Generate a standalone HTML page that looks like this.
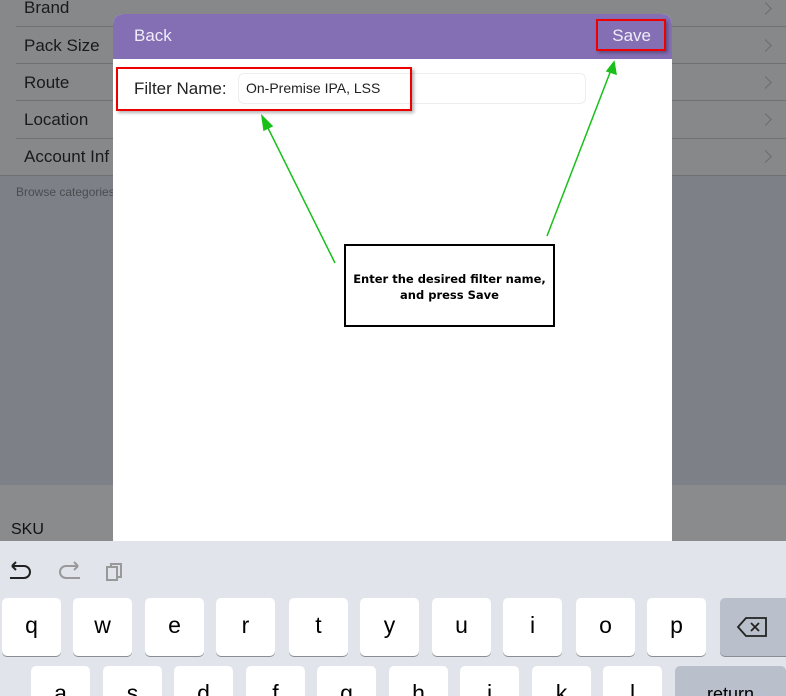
<!DOCTYPE html><html style="height:696px;overflow:hidden"><head><style>
body{margin:0;width:786px;height:696px;overflow:hidden;position:relative;font-family:"Liberation Sans",sans-serif;background:#86888a}
.abs{position:absolute}
.row{position:absolute;left:24px;font-size:17px;color:#1a1a1a}
.sep{position:absolute;left:16px;right:0;height:1px;background:#6f7173}
.chev{position:absolute;right:16px;width:8px;height:8px;border-right:1.5px solid #6a6c6e;border-top:1.5px solid #6a6c6e;transform:rotate(45deg)}
.key{position:absolute;width:59px;height:58px;background:#fff;border-radius:5px;box-shadow:0 1px 0 #8a8d92;font-size:23px;text-align:center;line-height:54px;color:#000}
</style></head><body>
<div class="abs" style="left:0;top:175px;width:786px;height:366px;background:#7d8086"></div>
<div class="abs" style="left:0;top:485px;width:786px;height:56px;background:#8a8b8d"></div>
<div class="row" style="top:-2px">Brand</div>
<div class="row" style="top:36px">Pack Size</div>
<div class="row" style="top:73px">Route</div>
<div class="row" style="top:110px">Location</div>
<div class="row" style="top:147px">Account Inf</div>
<div class="sep" style="top:26px"></div><div class="sep" style="top:63px"></div><div class="sep" style="top:100px"></div><div class="sep" style="top:138px"></div><div class="sep" style="top:175px;left:0"></div>
<div class="chev" style="top:4px"></div><div class="chev" style="top:41px"></div><div class="chev" style="top:78px"></div><div class="chev" style="top:115px"></div><div class="chev" style="top:152px"></div>
<div class="abs" style="left:16px;top:185px;font-size:12px;color:#4a4c50">Browse categories</div>
<div class="abs" style="left:11px;top:521px;font-size:16px;color:#111">SKU</div>
<div class="abs" style="left:113px;top:14px;width:559px;height:527px;background:#fff;border-radius:10px 10px 0 0;overflow:hidden">
<div style="height:45px;background:#846fb5;position:relative">
<span class="abs" style="left:21px;top:12px;font-size:17px;color:#f0ecf8">Back</span>
<span class="abs" style="right:21px;top:12px;font-size:17px;color:#f0ecf8">Save</span>
</div>
<div class="abs" style="left:125px;top:59px;width:346px;height:29px;border:1px solid #eee;border-radius:6px"></div>
<div class="abs" style="left:21px;top:65px;font-size:17px;color:#222">Filter Name:</div>
<div class="abs" style="left:133px;top:66px;font-size:14px;color:#222">On-Premise IPA, LSS</div>
</div>
<div class="abs" style="left:116px;top:67px;width:292px;height:40px;border:2px solid #e00;box-shadow:2px 2px 3px rgba(0,0,0,.3)"></div>
<div class="abs" style="left:596px;top:19px;width:66px;height:28px;border:2px solid #e00;box-shadow:2px 2px 3px rgba(0,0,0,.3)"></div>
<svg class="abs" style="left:0;top:0" width="786" height="540">
<g stroke="#19c019" stroke-width="1.5" fill="#19c019">
<line x1="335" y1="263" x2="266" y2="124"/><polygon points="262,116 272,126 264,130"/>
<line x1="547" y1="236" x2="611" y2="70"/><polygon points="614,62 616,74 607,71"/>
</g></svg>
<div class="abs" style="left:344px;top:244px;width:211px;height:83px;border:2px solid #000;background:#fff;font-family:'DejaVu Sans',sans-serif;font-weight:bold;font-size:11.5px;text-align:center;line-height:16px;padding-top:25px;box-sizing:border-box">Enter the desired filter name,<br>and press Save</div>
<div class="abs" style="left:0;top:541px;width:786px;height:155px;background:#e1e5eb;overflow:hidden">
<svg class="abs" style="left:8px;top:19px" width="130" height="26" fill="none" stroke-width="2">
<path d="M4 6 h12 a6 6 0 0 1 0 12 h-14 M4 6 l4-4 M4 6 l4 4" stroke="#222"/>
<path d="M70 6 h-12 a6 6 0 0 0 0 12 h14 M70 6 l-4-4 M70 6 l-4 4" stroke="#999"/>
<rect x="99" y="7" width="10" height="13" stroke="#999"/><path d="M103 7 v-3 h10 v13 h-4" stroke="#999"/>
</svg>
<div class="key" style="left:2px;top:57px">q</div><div class="key" style="left:73px;top:57px">w</div><div class="key" style="left:145px;top:57px">e</div><div class="key" style="left:216px;top:57px">r</div><div class="key" style="left:289px;top:57px">t</div><div class="key" style="left:360px;top:57px">y</div><div class="key" style="left:432px;top:57px">u</div><div class="key" style="left:503px;top:57px">i</div><div class="key" style="left:576px;top:57px">o</div><div class="key" style="left:647px;top:57px">p</div>
<div class="key" style="left:720px;top:57px;width:66px;background:#b9c0cb;border-radius:5px 0 0 5px"><svg width="34" height="24" style="margin-top:17px" fill="none" stroke="#222" stroke-width="1.8"><path d="M10 3 h20 v18 h-20 l-8-9z M15 8 l8 8 M23 8 l-8 8"/></svg></div>
<div class="key" style="left:31px;top:125px">a</div><div class="key" style="left:103px;top:125px">s</div><div class="key" style="left:174px;top:125px">d</div><div class="key" style="left:246px;top:125px">f</div><div class="key" style="left:317px;top:125px">g</div><div class="key" style="left:389px;top:125px">h</div><div class="key" style="left:460px;top:125px">j</div><div class="key" style="left:532px;top:125px">k</div><div class="key" style="left:603px;top:125px">l</div>
<div class="key" style="left:675px;top:125px;width:111px;background:#b9c0cb;font-size:18px;line-height:56px">return</div>
</div>
</body></html>
